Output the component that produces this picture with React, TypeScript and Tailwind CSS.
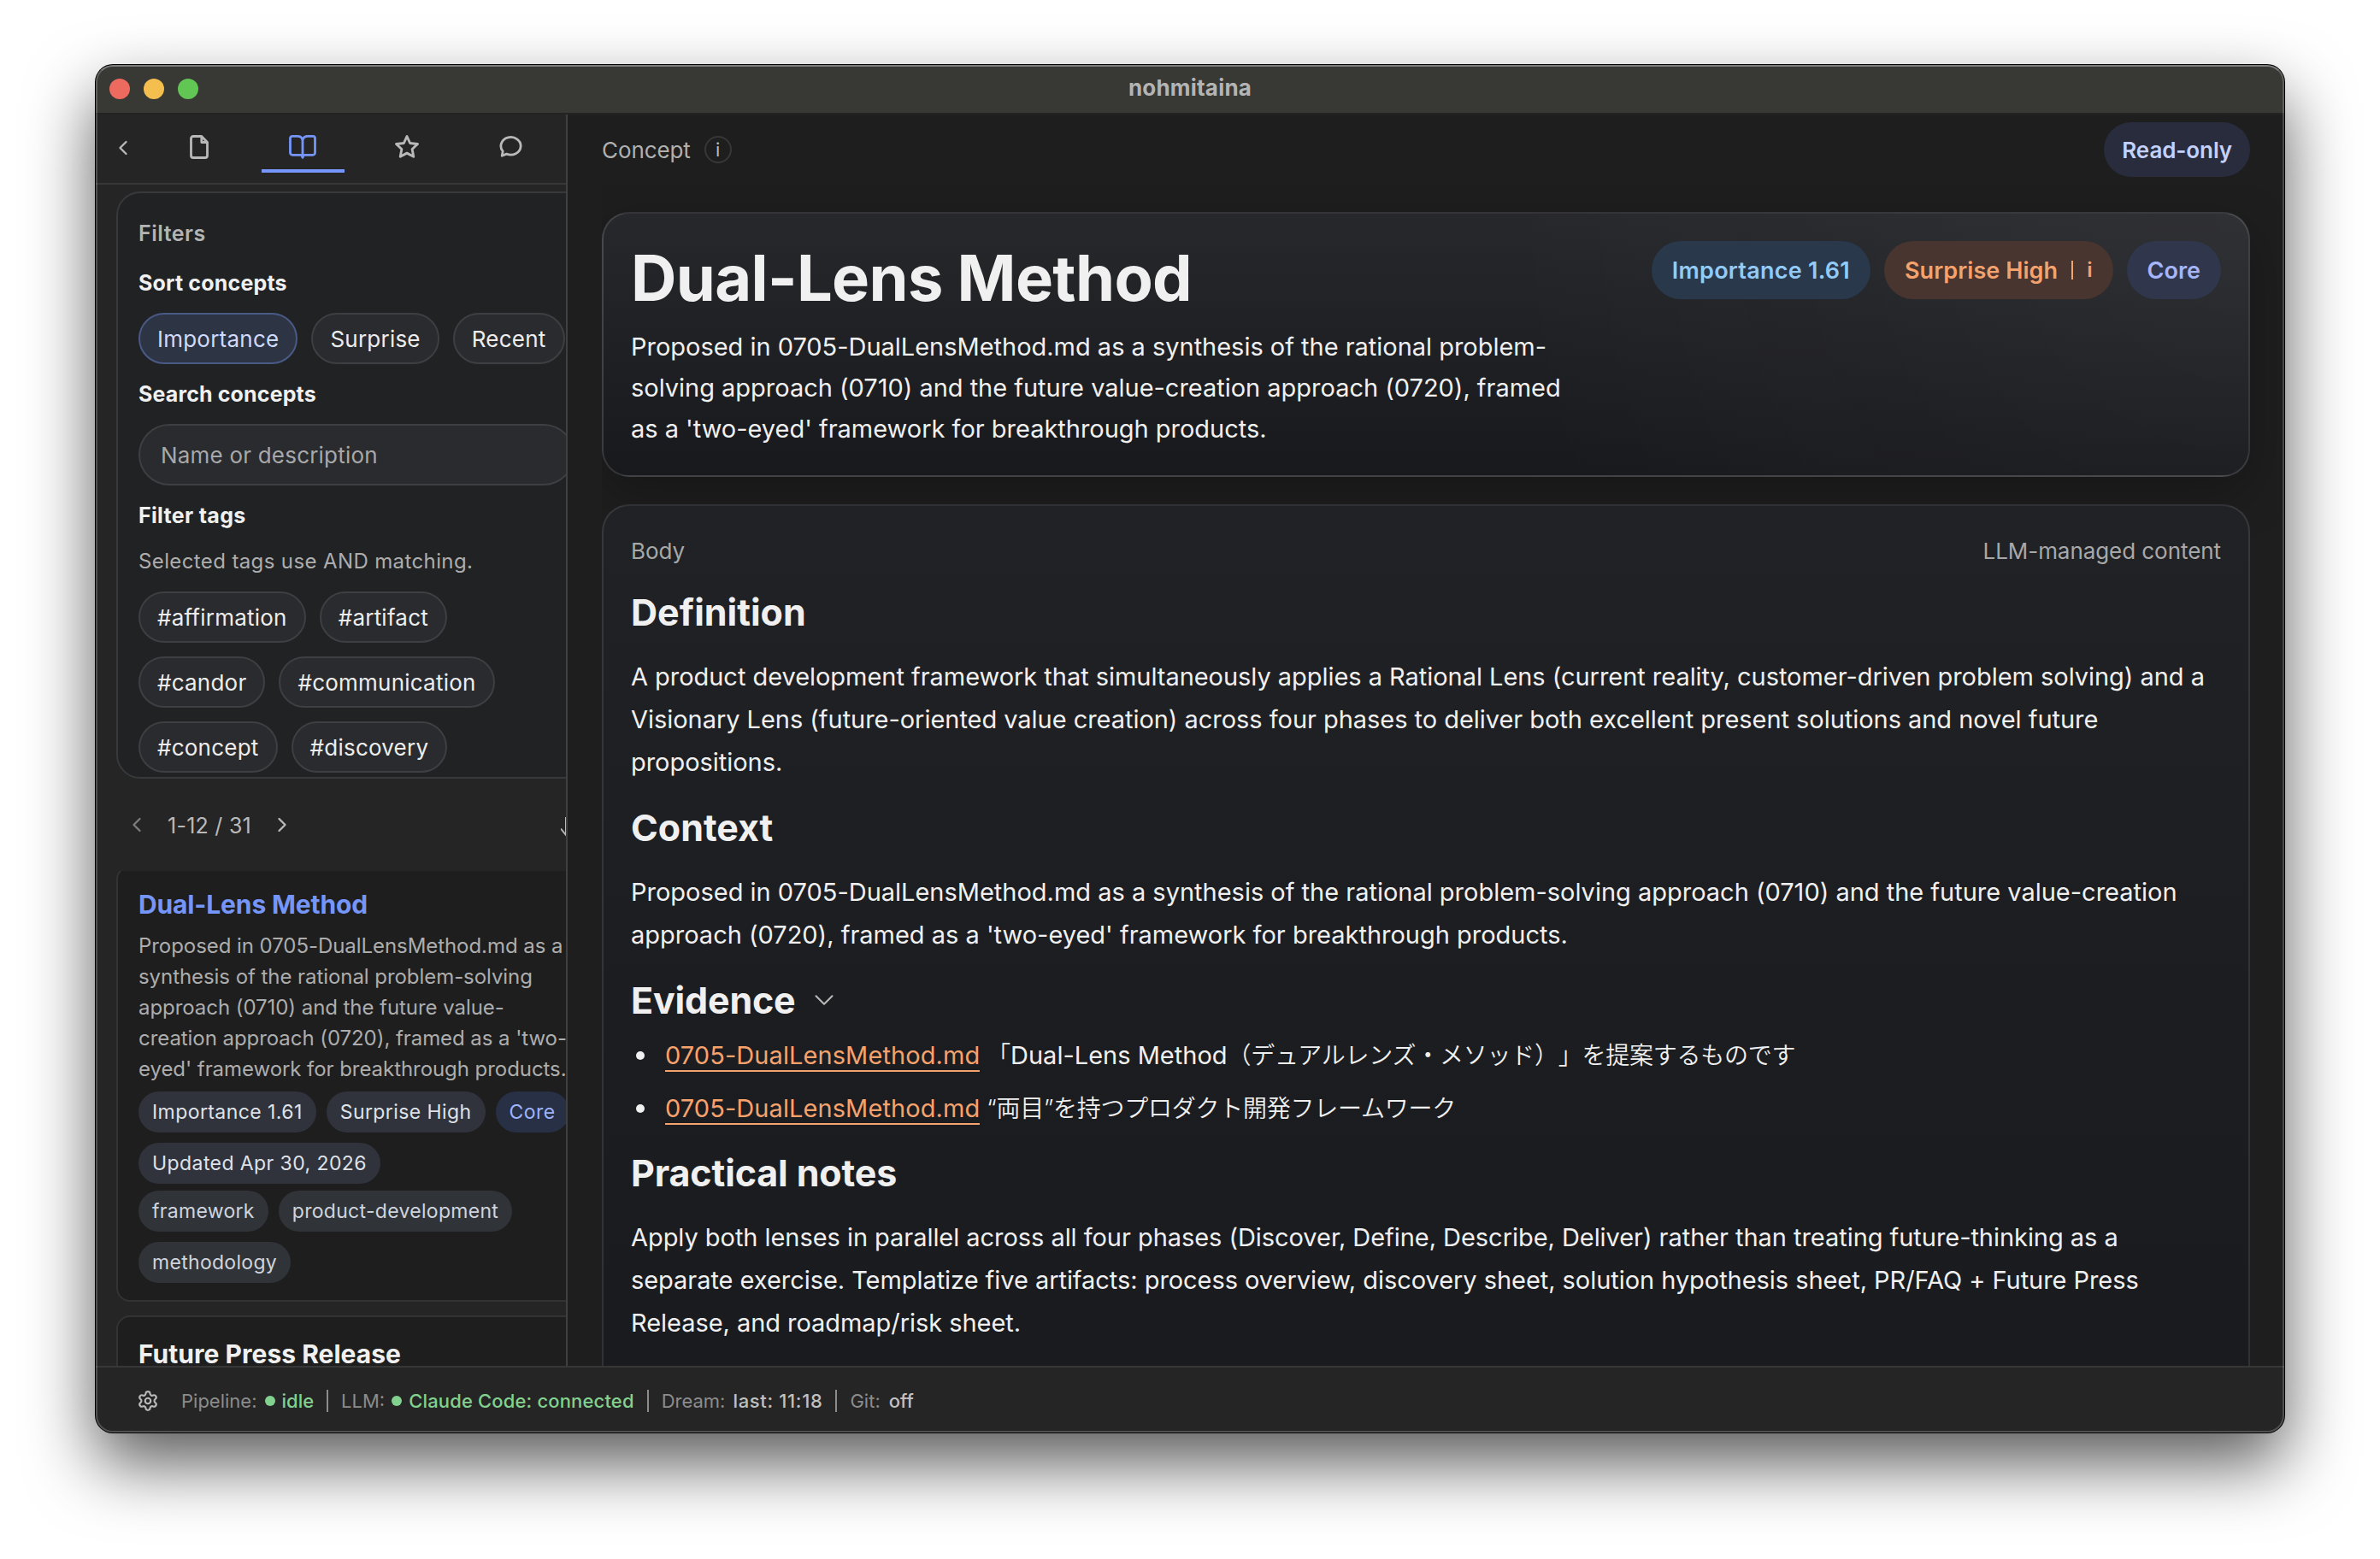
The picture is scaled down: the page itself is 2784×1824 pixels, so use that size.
import { ReactNode } from "react";
import { ChevronDown, ChevronLeft, ChevronRight, Settings } from "lucide-react";

type Badge = { label: string; accent?: boolean };

const sortOptions = ["Importance", "Surprise", "Recent"];

const filterTags = [
  "#affirmation",
  "#artifact",
  "#candor",
  "#communication",
  "#concept",
  "#discovery",
];

const badges: Badge[] = [
  { label: "Importance 1.61" },
  { label: "Surprise High" },
  { label: "Core", accent: true },
  { label: "Updated Apr 30, 2026" },
];

const conceptTags = ["framework", "product-development", "methodology"];

const FileIcon = () => (
  <svg width="22" height="28" viewBox="0 0 22 28" fill="none" stroke="currentColor" strokeWidth="2.8" strokeLinejoin="round">
    <path d="M13.8 1.5H4A2.5 2.5 0 0 0 1.5 4v20A2.5 2.5 0 0 0 4 26.5h14a2.5 2.5 0 0 0 2.5-2.5V8.5z" />
    <path d="M13.8 1.5v7h6.7" />
  </svg>
);

const BookIcon = () => (
  <svg width="32" height="30" viewBox="0 0 32 30" fill="none" stroke="currentColor" strokeWidth="2.8" strokeLinecap="round" strokeLinejoin="round">
    <path d="M16 6.5C15 3.3 12.5 2.3 10 2.3H4a2.5 2.5 0 0 0-2.5 2.5v17A2.5 2.5 0 0 0 4 24.3h9.5c1.5 0 2.5.8 2.5 2.9" />
    <path d="M16 6.5c1-3.200 3.500-4.200 6-4.200h6a2.5 2.5 0 0 1 2.5 2.5v17a2.5 2.5 0 0 1-2.5 2.5h-9.5c-1.500 0-2.500.8-2.500 2.900z" />
  </svg>
);

const StarIcon = () => (
  <svg width="30" height="30" viewBox="0 0 24 24" fill="none" stroke="currentColor" strokeWidth="2.3" strokeLinejoin="round">
    <path d="M12 2l2.9 6.4 7.1.8-5.1 4.8 1.3 7-6.200-3.300L5.800 21l1.300-7L2 9.200l7.100-.8z" />
  </svg>
);

const ChatIcon = () => (
  <svg width="28" height="28" viewBox="0 0 28 28" fill="none" stroke="currentColor" strokeWidth="2.8" strokeLinejoin="round">
    <path d="M9.6 22.1 4.2 24.3l1-5.4A11.6 10.3 0 1 1 9.6 22.1z" />
  </svg>
);

const tabs = [
  { name: "files", icon: <FileIcon /> },
  { name: "concepts", icon: <BookIcon />, active: true },
  { name: "starred", icon: <StarIcon /> },
  { name: "chat", icon: <ChatIcon /> },
];

const TitleBar = () => (
  <div className="flex h-[58px] shrink-0 items-center border-b-2 border-[#232323] bg-[#383835] px-4">
    <div className="flex w-[120px] gap-4">
      <span className="size-6 rounded-full bg-[#ed6a5f]" />
      <span className="size-6 rounded-full bg-[#f5bf4f]" />
      <span className="size-6 rounded-full bg-[#62c655]" />
    </div>
    <h1 className="flex-1 pb-0.5 text-center text-[26px] leading-8 font-bold tracking-[0.2px] text-[#b4b4b2]">
      nohmitaina
    </h1>
    <div className="w-[120px]" />
  </div>
);

const SidebarTabs = () => (
  <div className="flex h-[82px] shrink-0 items-start border-b-2 border-[#373737] pt-1 text-[#b9b9b9]">
    <button className="flex h-[70px] w-16 items-center justify-center">
      <ChevronLeft size={28} strokeWidth={2} />
    </button>
    <div className="ml-2 grid w-[462px] grid-cols-4 gap-6">
      {tabs.map((tab) => (
        <button
          key={tab.name}
          className={
            tab.active
              ? "flex h-16 items-center justify-center border-b-4 border-[#7596f8] pt-2 text-[#7596f8]"
              : "flex h-16 items-center justify-center border-b-4 border-transparent pt-2"
          }
        >
          {tab.icon}
        </button>
      ))}
    </div>
  </div>
);

const Pill = ({ children, active }: { children: ReactNode; active?: boolean }) => (
  <button
    className={
      active
        ? "h-[60px] rounded-full border-2 border-[#4a5a86] bg-[#2d3444] px-5 pt-px text-[26px] tracking-[0.23px] text-[#cfdafd]"
        : "h-[60px] rounded-full border-2 border-[#3e3f42] bg-[#2a2b2f] px-5 pt-px text-[26px] tracking-[0.23px] text-[#ededed]"
    }
  >
    {children}
  </button>
);

const Filters = () => (
  <section className="h-[687px] w-[562px] overflow-hidden rounded-[28px] border-2 border-[#38393b] bg-[#212224] px-6 pt-8 text-[25px] leading-[30px] text-[#f0f0f0]">
    <h2 className="font-semibold tracking-[0.5px] text-[#b4b4b4]">Filters</h2>
    <h3 className="mt-7 font-bold tracking-[0.18px]">Sort concepts</h3>
    <div className="mt-5 flex gap-4">
      {sortOptions.map((option, i) => (
        <Pill key={option} active={i === 0}>
          {option}
        </Pill>
      ))}
    </div>
    <h3 className="mt-5 font-bold tracking-[0.14px]">Search concepts</h3>
    <input
      className="mt-5 block h-[72px] w-full rounded-full border-2 border-[#3e3f42] bg-[#2a2b2f] px-6 text-[26px] tracking-[0.2px] placeholder:text-[#a8a8a8]"
      placeholder="Name or description"
    />
    <h3 className="mt-5 font-bold tracking-[0.32px]">Filter tags</h3>
    <p className="mt-6 text-2xl leading-[30px] tracking-[0.38px] text-[#adadad]">
      Selected tags use AND matching.
    </p>
    <div className="mt-5 flex flex-wrap gap-4">
      {filterTags.map((tag) => (
        <Pill key={tag}>{tag}</Pill>
      ))}
    </div>
  </section>
);

const Pager = () => (
  <div className="flex h-[108px] w-[532px] shrink-0 items-center text-[#b9b9b9]">
    <ChevronLeft className="ml-2.5 text-[#7c7c7c]" size={28} strokeWidth={2} />
    <span className="ml-[22px] w-[98px] pt-px text-[25px] leading-[30px] tracking-[0.25px] whitespace-nowrap">
      1-12 / 31
    </span>
    <ChevronRight className="ml-[22px]" size={28} strokeWidth={2} />
    <svg className="mt-1 ml-auto" width="12" height="24" viewBox="0 0 12 24" fill="none" stroke="currentColor" strokeWidth="2">
      <path d="M6 1v21M0 14.5l6 7.5 6-7.5" />
    </svg>
  </div>
);

const ConceptCard = () => (
  <article className="rounded-2xl border-2 border-[#333] bg-[#1e1e1e] px-6 pt-6 pb-5">
    <h2 className="text-[30px] leading-[39px] font-bold tracking-[-0.13px] text-[#7596f8]">
      Dual-Lens Method
    </h2>
    <p className="mt-[11px] text-2xl leading-9 tracking-[-0.06px] text-[#adadad]">
      Proposed in 0705-DualLensMethod.md as a synthesis of the rational problem-solving approach
      (0710) and the future value-creation approach (0720), framed as a 'two-eyed' framework for
      breakthrough products.
    </p>
    <div className="mt-2 flex flex-wrap gap-3 text-[23px] leading-[48px] tracking-[0.42px]">
      {badges.map((badge) => (
        <span
          key={badge.label}
          className={
            badge.accent
              ? "rounded-full bg-[#283046] px-4 text-[#9db3fa]"
              : "rounded-full bg-[#30333c] px-4 text-[#dfe2e9]"
          }
        >
          {badge.label}
        </span>
      ))}
    </div>
    <div className="mt-2 flex flex-wrap gap-3 text-[23px] leading-[48px] tracking-[0.3px]">
      {conceptTags.map((tag) => (
        <span key={tag} className="rounded-full bg-[#303439] px-4 text-[#d0d5dd]">
          {tag}
        </span>
      ))}
    </div>
  </article>
);

const Sidebar = () => (
  <aside className="flex w-[552px] shrink-0 flex-col overflow-hidden border-r-2 border-[#404040] bg-[#252525]">
    <SidebarTabs />
    <div className="flex min-h-0 flex-1 flex-col overflow-hidden pt-2 pl-6">
      <div className="shrink-0">
        <Filters />
      </div>
      <Pager />
      <div className="min-h-0 flex-1 overflow-hidden">
        <div className="-mt-1.5 flex w-[562px] flex-col gap-4">
          <ConceptCard />
          <article className="h-60 rounded-2xl border-2 border-[#333] bg-[#1e1e1e] px-6 pt-[30px]">
            <h2 className="text-[30px] leading-[26px] font-bold tracking-[0.02px] text-[#f0f0f0]">
              Future Press Release
            </h2>
          </article>
        </div>
      </div>
    </div>
  </aside>
);

const Hero = () => (
  <section className="flex h-[310px] shrink-0 justify-between rounded-[32px] border-2 border-white/12 bg-[radial-gradient(circle_at_top_right,rgba(255,255,255,0.045),transparent_45%),linear-gradient(180deg,#27282c,#18191d)] px-8 pt-8 shadow-[0_20px_60px_rgba(0,0,0,0.25)]">
    <div className="w-[1110px]">
      <h1 className="mb-3.5 text-[74px] leading-[86px] font-bold tracking-[-0.65px]">
        Dual-Lens Method
      </h1>
      <p className="leading-[48px] tracking-[-0.02px]">
        Proposed in 0705-DualLensMethod.md as a synthesis of the rational problem-solving approach
        (0710) and the future value-creation approach (0720), framed as a 'two-eyed' framework for
        breakthrough products.
      </p>
    </div>
    <div className="flex gap-4 text-[27px] leading-[69px] font-[560]">
      <span className="h-[68px] rounded-full bg-[#29394b] px-6 tracking-[0.25px] text-[#93cbf8]">
        Importance 1.61
      </span>
      <span className="flex h-[68px] items-center rounded-full bg-[#48352f] px-6 tracking-[0.08px] text-[#f5a26d]">
        Surprise High
        <span className="ml-4 h-[22px] w-0.5 bg-[#f5a26d]" />
        <span className="ml-4 text-2xl leading-[68px]">i</span>
      </span>
      <span className="h-[68px] rounded-full bg-[#30374d] px-6 text-[#a5b6fb]">Core</span>
    </div>
  </section>
);

// Japanese glyphs run slightly smaller than the Latin text around them
const Ja = ({ children }: { children: ReactNode }) => (
  <span lang="ja" className="text-[28px] font-[350] tracking-[-0.25px] [text-spacing-trim:space-all]">
    {children}
  </span>
);

const EvidenceItem = ({ children }: { children: ReactNode }) => (
  <li className="flex h-[50px] items-center">
    <span className="ml-1.5 size-2.5 rounded-full bg-[#f0f0f0]" />
    <a className="ml-6 h-[44px] self-start border-b-2 border-[#f5a26d] leading-[50px] tracking-[0.08px] text-[#f5a26d]">
      0705-DualLensMethod.md
    </a>
    <span className="ml-2">{children}</span>
  </li>
);

const Body = () => (
  <section className="mt-8 h-[1200px] shrink-0 rounded-[32px] border-2 border-white/10 bg-[linear-gradient(180deg,#212226,#1c1d21_50%,#191a1e)] px-8 pt-8 leading-[50px]">
    <div className="flex justify-between text-[26px] leading-[42px] tracking-[-0.06px] text-[#a8a8a8]">
      <span>Body</span>
      <span>LLM-managed content</span>
    </div>
    <h2 className="mt-6 mb-[25px] text-[43px] leading-[52px] font-bold">Definition</h2>
    <p className="tracking-[-0.04px]">
      A product development framework that simultaneously applies a Rational Lens (current reality,
      customer-driven problem solving) and a Visionary Lens (future-oriented value creation) across
      four phases to deliver both excellent present solutions and novel future propositions.
    </p>
    <h2 className="my-[25px] text-[43px] leading-[52px] font-bold">Context</h2>
    <p className="tracking-[-0.01px]">
      Proposed in 0705-DualLensMethod.md as a synthesis of the rational problem-solving approach
      (0710) and the future value-creation approach (0720), framed as a 'two-eyed' framework for
      breakthrough products.
    </p>
    <h2 className="mt-[25px] mb-3.5 flex items-center text-[43px] leading-[52px] font-bold tracking-[-0.18px]">
      Evidence
      <ChevronDown className="ml-3.5 text-[#b9b9b9]" size={38} strokeWidth={1.3} />
    </h2>
    <ul className="flex flex-col gap-3">
      <EvidenceItem>
        <Ja>「</Ja>Dual-Lens Method<Ja>（デュアルレンズ・メソッド）」を提案するものです</Ja>
      </EvidenceItem>
      <EvidenceItem>
        <Ja>“両目”を持つプロダクト開発フレームワーク</Ja>
      </EvidenceItem>
    </ul>
    <h2 className="mt-6 mb-[25px] text-[43px] leading-[52px] font-bold tracking-[-0.13px]">
      Practical notes
    </h2>
    <p className="tracking-[-0.05px]">
      Apply both lenses in parallel across all four phases (Discover, Define, Describe, Deliver)
      rather than treating future-thinking as a separate exercise. Templatize five artifacts: process
      overview, discovery sheet, solution hypothesis sheet, PR/FAQ + Future Press Release, and
      roadmap/risk sheet.
    </p>
  </section>
);

const Main = () => (
  <main className="flex min-w-0 flex-1 flex-col bg-[#1e1e1e] pl-10">
    <header className="flex h-[82px] shrink-0 items-center pr-10 text-[26px]">
      <span className="pt-px tracking-[-0.1px] text-[#b0b0b0]">Concept</span>
      <span className="ml-4 flex size-8 items-center justify-center rounded-full border-2 border-[#373737] text-[22px] text-[#b9b9b9]">
        i
      </span>
      <span className="ml-auto h-16 rounded-full bg-[#292c3c] px-[21px] leading-[66px] font-semibold tracking-[-0.1px] text-[#c5d1fb]">
        Read-only
      </span>
    </header>
    <div className="flex min-h-0 flex-1 flex-col overflow-hidden pt-8 pr-10 text-[29px] text-[#f0f0f0]">
      <Hero />
      <Body />
    </div>
  </main>
);

const Separator = () => <span className="mr-[15px] ml-[15px] h-[26px] w-0.5 bg-[#8c8c8c]" />;

const StatusBar = () => (
  <footer className="flex h-[78px] shrink-0 items-center border-t-2 border-[#373737] bg-[#252525] pt-0.5 pl-12 text-[22px] text-[#8c8c8c]">
    <Settings className="text-[#b9b9b9]" size={26} strokeWidth={2} />
    <span className="ml-[26px]">Pipeline:</span>
    <span className="ml-[9px] size-3 rounded-full bg-[#82d18f]" />
    <span className="ml-2 font-medium text-[#82d18f]">idle</span>
    <Separator />
    <span>LLM:</span>
    <span className="ml-2 size-3 rounded-full bg-[#82d18f]" />
    <span className="ml-2 font-medium tracking-[0.15px] text-[#82d18f]">Claude Code: connected</span>
    <Separator />
    <span>Dream:</span>
    <span className="ml-[9px] font-medium tracking-[0.65px] text-[#c0c0c0]">last: 11:18</span>
    <Separator />
    <span>Git:</span>
    <span className="ml-2.5 font-medium text-[#c0c0c0]">off</span>
  </footer>
);

export default function App() {
  return (
    <div className="h-[1824px] w-[2784px] overflow-hidden bg-white px-28 pt-[76px] font-['Inter','Noto_Sans_CJK_JP',sans-serif]">
      <div className="relative flex h-[1600px] w-[2560px] flex-col overflow-hidden rounded-[20px] bg-[#252525] shadow-[0_0_0_1px_#000,0_36px_80px_rgba(0,0,0,0.65)]">
        <TitleBar />
        <div className="flex min-h-0 flex-1">
          <Sidebar />
          <Main />
        </div>
        <StatusBar />
        {/* light rim along the window edge */}
        <div className="pointer-events-none absolute inset-0 rounded-[20px] border-2 border-white/20 border-t-white/35" />
      </div>
    </div>
  );
}
